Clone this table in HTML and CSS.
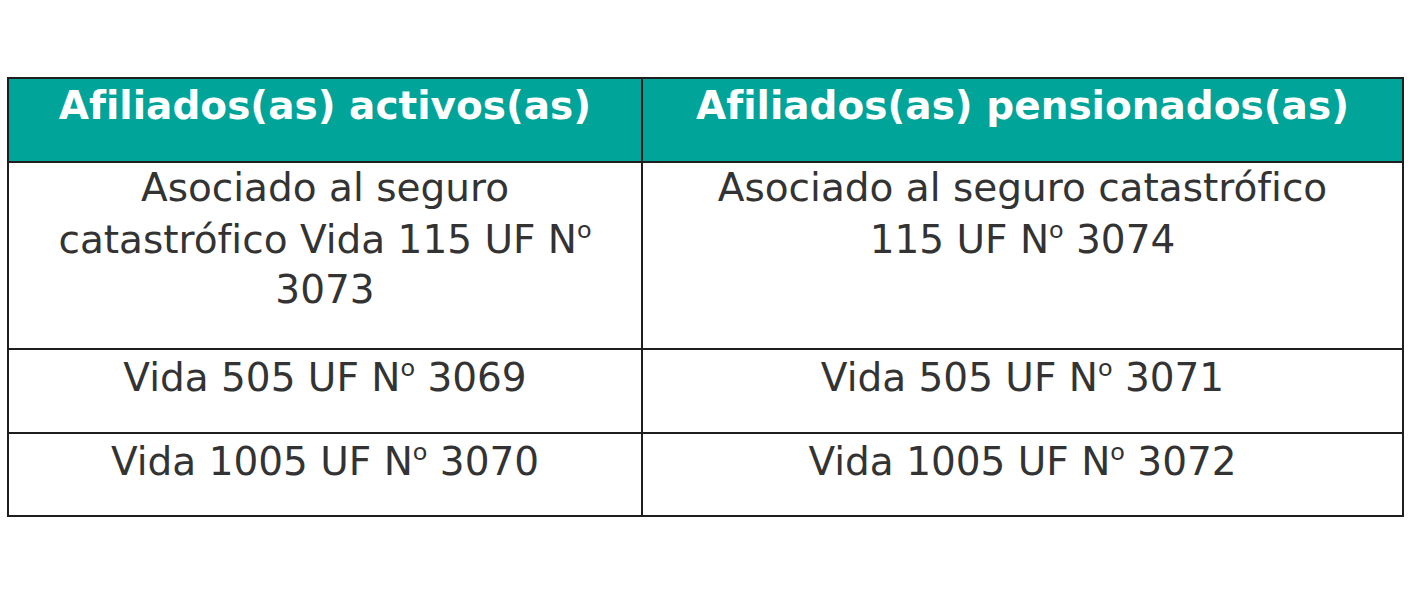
FILE: index.html
```html
<!DOCTYPE html>
<html lang="es">
<head>
<meta charset="utf-8">
<link rel="stylesheet" href="styles.css">
</head>
<body>
<table class="plans">
  <thead>
    <tr>
      <th class="col-left">Afiliados(as) activos(as)</th>
      <th class="col-right">Afiliados(as) pensionados(as)</th>
    </tr>
  </thead>
  <tbody>
    <tr class="row-tall">
      <td>Asociado al seguro catastrófico Vida 115 UF N<span class="ord">º</span> 3073</td>
      <td>Asociado al seguro catastrófico 115 UF N<span class="ord">º</span> 3074</td>
    </tr>
    <tr class="row">
      <td>Vida 505 UF N<span class="ord">º</span> 3069</td>
      <td>Vida 505 UF N<span class="ord">º</span> 3071</td>
    </tr>
    <tr class="row row-last">
      <td>Vida 1005 UF N<span class="ord">º</span> 3070</td>
      <td>Vida 1005 UF N<span class="ord">º</span> 3072</td>
    </tr>
  </tbody>
</table>
</body>
</html>
```
FILE: styles.css
```css
html, body {
  margin: 0;
  padding: 0;
  background: #ffffff;
}

body {
  padding-top: 77px;
  padding-left: 7px;
}

.plans {
  border-collapse: collapse;
  table-layout: fixed;
  width: 1397px;
  font-family: "DejaVu Sans", Verdana, sans-serif;
  font-size: 39px;
  line-height: 50px;
  color: #333333;
}

.plans th,
.plans td {
  border: 2px solid #1e1e1e;
  text-align: center;
  vertical-align: top;
  padding: 0 40px;
}

.col-left {
  width: 634px;
}

.plans th {
  background: #00a499;
  color: #ffffff;
  font-weight: bold;
  height: 84px;
  box-sizing: border-box;
  padding-top: 2px;
}

.row-tall td {
  height: 187px;
  box-sizing: border-box;
}

.row td {
  height: 84px;
  box-sizing: border-box;
  padding-top: 1px;
}

.row-last td {
  height: 83px;
}

.ord {
  font-family: "Open Sans", sans-serif;
}
```
